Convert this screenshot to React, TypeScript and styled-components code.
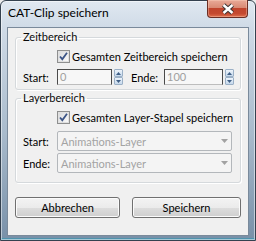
import React from 'react';
import styled, { createGlobalStyle } from 'styled-components';

const GlobalStyle = createGlobalStyle`
  html, body {
    margin: 0;
    padding: 0;
    background: #ececec;
  }

  body {
    font-family: Lato, 'Liberation Sans', sans-serif;
    font-size: 11px;
    color: #000;
  }

  * {
    box-sizing: border-box;
  }
`;

const Window = styled.div`
  position: relative;
  display: flex;
  flex-direction: column;
  width: 256px;
  height: 241px;
  padding: 0 6px 4px;

  border: 1px solid #34414f;
  border-radius: 6px 6px 0 0;
  background: linear-gradient(
    to bottom,
    #e0e8f1 0,
    #d0dbe7 26px,
    #a9bbcc 55%,
    #7890a8 100%
  );
  box-shadow: inset 0 0 0 1px rgba(255, 255, 255, 0.5), inset 0 -2px 0 #4f93ad;
`;

const TitleBar = styled.div`
  height: 26px;
  padding: 5px 0 0 1px;
  line-height: 14px;
  font-size: 12px;
  color: #000;
`;

const CloseButton = styled.div`
  position: absolute;
  top: -1px;
  right: 7px;
  width: 41px;
  height: 18px;
  display: flex;
  align-items: center;
  justify-content: center;

  border: 1px solid #6b2e24;
  border-top: none;
  border-radius: 0 0 4px 4px;
  background: linear-gradient(
    to bottom,
    #e9aa98 0%,
    #d98a74 45%,
    #c0442c 50%,
    #c44a30 80%,
    #e0704e 100%
  );
  box-shadow: inset 0 0 0 1px rgba(255, 220, 200, 0.35);
`;

const Client = styled.div`
  flex: 1;
  display: flex;
  flex-direction: column;
  padding: 2px 7px 0;

  border: 1px solid #7a8a9b;
  background: #f0f0f0;
`;

const Group = styled.fieldset<{ $gap: number; $pb: number }>`
  margin: ${(p) => p.$gap}px 0 0;
  padding: 0 7px ${(p) => p.$pb}px;
  min-width: 0;

  border: 1px solid #d5d9dc;
  border-radius: 3px;
  box-shadow: inset 1px 1px 0 #fff, 1px 1px 0 #fff;
`;

const Legend = styled.legend`
  margin-left: -2px;
  padding: 0 2px;
  line-height: 14px;
  font-size: 11px;
  color: #0a0a0a;
`;

const CheckRow = styled.label`
  display: flex;
  align-items: center;
  gap: 2px;
  height: 13px;
  margin: 6px 0 0 34px;
  white-space: nowrap;

  svg {
    flex: none;
  }
`;

const FieldRow = styled.div<{ $mt: number }>`
  display: flex;
  align-items: center;
  margin-top: ${(p) => p.$mt}px;
`;

const Label = styled.span<{ $w: number }>`
  flex: none;
  width: ${(p) => p.$w}px;
`;

const NumberBox = styled.div<{ $w: number }>`
  flex: none;
  width: ${(p) => p.$w}px;
  height: 16px;
  padding-left: 2px;

  border: 1px solid #4a4a4a;
  border-bottom-color: #bdbdbd;
  background: #f7f7f7;
  color: #a0a0a0;
  line-height: 14px;
`;

const Spinner = styled.div<{ $ml: number }>`
  flex: none;
  display: flex;
  flex-direction: column;
  width: 9px;
  height: 16px;
  margin: 0 ${(p) => p.$ml}px 0 2px;
`;

const SpinHalf = styled.div`
  flex: 1;
  display: flex;
  align-items: center;
  justify-content: center;

  border: 1px solid #9bb0c6;
  border-radius: 1px;
  background: linear-gradient(to bottom, #eef4fb, #c5d8ec);
`;

const Combo = styled.div`
  flex: none;
  display: flex;
  align-items: center;
  justify-content: space-between;
  width: 175px;
  height: 20px;
  padding: 0 3px 0 3px;

  border: 1px solid #b3b7bb;
  border-radius: 2px;
  background: #f4f4f4;
  color: #a3a3a3;
`;

const ButtonRow = styled.div`
  display: grid;
  grid-template-columns: 105px 1fr;
  gap: 12px;
  margin-top: 14px;
`;

const Button = styled.button`
  height: 21px;
  padding: 0;

  border: 1px solid #707070;
  border-radius: 3px;
  background: linear-gradient(
    to bottom,
    #f3f3f3 0%,
    #ebebeb 50%,
    #dddddd 51%,
    #cfcfcf 100%
  );
  box-shadow: inset 0 0 0 1px #fbfbfb;

  font-family: inherit;
  font-size: 11px;
  color: #000;
`;

const CheckBox = () => (
  <svg width="13" height="13" viewBox="0 0 13 13">
    <defs>
      <linearGradient id="cbg" x1="0" y1="0" x2="1" y2="1">
        <stop offset="0" stopColor="#d8dadc" />
        <stop offset="1" stopColor="#fbfbfb" />
      </linearGradient>
    </defs>
    <rect x="0.5" y="0.5" width="12" height="12" fill="#f4f4f4" stroke="#8e8f8f" />
    <rect x="1.5" y="1.5" width="10" height="10" fill="url(#cbg)" stroke="#e0e0e0" />
    <path d="M3 6.5 L5.3 9.2 L10 2.8" fill="none" stroke="#3b5486" strokeWidth="1.8" />
  </svg>
);

const Arrow = ({ color }: { color: string }) => (
  <svg width="7" height="4" viewBox="0 0 7 4">
    <path d="M0 0 L7 0 L3.5 4 Z" fill={color} />
  </svg>
);

const Spin = ({ ml }: { ml: number }) => (
  <Spinner $ml={ml}>
    <SpinHalf>
      <svg width="5" height="3" viewBox="0 0 5 3">
        <path d="M0 3 L2.5 0 L5 3 Z" fill="#3f5f86" />
      </svg>
    </SpinHalf>
    <SpinHalf>
      <svg width="5" height="3" viewBox="0 0 5 3">
        <path d="M0 0 L5 0 L2.5 3 Z" fill="#3f5f86" />
      </svg>
    </SpinHalf>
  </Spinner>
);

const App: React.FC = () => {
  return (
    <>
      <GlobalStyle />
      <Window>
        <TitleBar>CAT-Clip speichern</TitleBar>
        <CloseButton>
          <svg width="14" height="12" viewBox="0 0 14 12">
            <path d="M2.5 2 L11.5 10 M11.5 2 L2.5 10" stroke="#3d3433" strokeWidth="4.4" />
            <path d="M2.5 2 L11.5 10 M11.5 2 L2.5 10" stroke="#fff" strokeWidth="2.4" />
          </svg>
        </CloseButton>

        <Client>
          <Group $gap={0} $pb={4}>
            <Legend>Zeitbereich</Legend>
            <CheckRow>
              <CheckBox />
              Gesamten Zeitbereich speichern
            </CheckRow>
            <FieldRow $mt={6}>
              <Label $w={34}>Start:</Label>
              <NumberBox $w={55}>0</NumberBox>
              <Spin ml={8} />
              <Label $w={33}>Ende:</Label>
              <NumberBox $w={59}>100</NumberBox>
              <Spin ml={0} />
            </FieldRow>
          </Group>

          <Group $gap={1} $pb={9}>
            <Legend>Layerbereich</Legend>
            <CheckRow>
              <CheckBox />
              Gesamten Layer-Stapel speichern
            </CheckRow>
            <FieldRow $mt={7}>
              <Label $w={34}>Start:</Label>
              <Combo>
                Animations-Layer
                <Arrow color="#a2a2a2" />
              </Combo>
            </FieldRow>
            <FieldRow $mt={2}>
              <Label $w={34}>Ende:</Label>
              <Combo>
                Animations-Layer
                <Arrow color="#a2a2a2" />
              </Combo>
            </FieldRow>
          </Group>

          <ButtonRow>
            <Button>Abbrechen</Button>
            <Button>Speichern</Button>
          </ButtonRow>
        </Client>
      </Window>
    </>
  );
};

export default App;
